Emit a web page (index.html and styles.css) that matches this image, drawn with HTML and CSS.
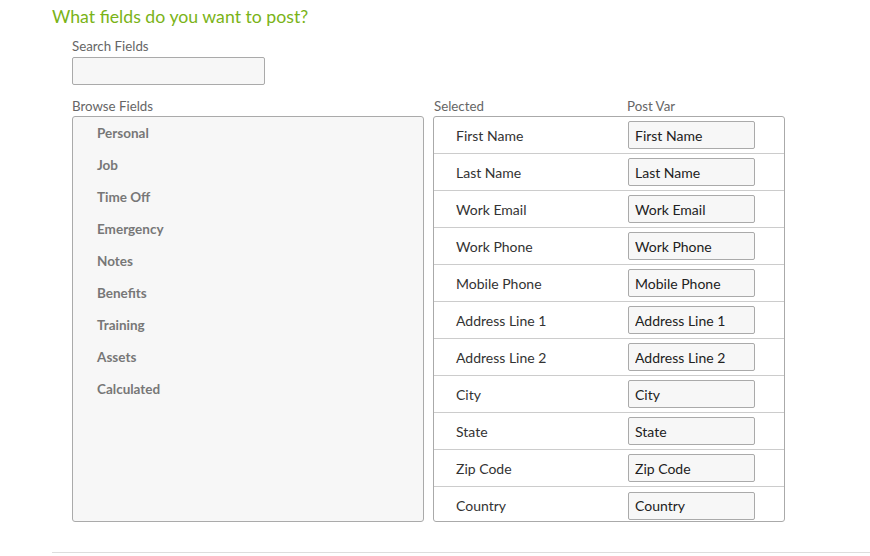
FILE: index.html
```html
<!DOCTYPE html>
<html>
<head>
<meta charset="utf-8">
<link rel="stylesheet" href="styles.css">
</head>
<body>
<div class="page">
  <h2 class="title">What fields do you want to post?</h2>
  <div class="content">
    <label class="label">Search Fields</label>
    <input class="search" type="text">
    <div class="columns">
      <div class="col-browse">
        <div class="label">Browse Fields</div>
        <div class="browse-box">
          <div class="cat">Personal</div>
          <div class="cat">Job</div>
          <div class="cat">Time Off</div>
          <div class="cat">Emergency</div>
          <div class="cat">Notes</div>
          <div class="cat">Benefits</div>
          <div class="cat">Training</div>
          <div class="cat">Assets</div>
          <div class="cat">Calculated</div>
        </div>
      </div>
      <div class="col-selected">
        <div class="sel-head">
          <div class="label h-sel">Selected</div>
          <div class="label h-var">Post Var</div>
        </div>
        <div class="sel-box">
          <div class="row"><span class="name">First Name</span><input class="var" value="First Name"></div>
          <div class="row"><span class="name">Last Name</span><input class="var" value="Last Name"></div>
          <div class="row"><span class="name">Work Email</span><input class="var" value="Work Email"></div>
          <div class="row"><span class="name">Work Phone</span><input class="var" value="Work Phone"></div>
          <div class="row"><span class="name">Mobile Phone</span><input class="var" value="Mobile Phone"></div>
          <div class="row"><span class="name">Address Line 1</span><input class="var" value="Address Line 1"></div>
          <div class="row"><span class="name">Address Line 2</span><input class="var" value="Address Line 2"></div>
          <div class="row"><span class="name">City</span><input class="var" value="City"></div>
          <div class="row"><span class="name">State</span><input class="var" value="State"></div>
          <div class="row"><span class="name">Zip Code</span><input class="var" value="Zip Code"></div>
          <div class="row"><span class="name">Country</span><input class="var" value="Country"></div>
        </div>
      </div>
    </div>
  </div>
  <div class="rule"></div>
</div>
</body>
</html>
```
FILE: styles.css
```css
* { box-sizing: border-box; }
html, body { margin: 0; padding: 0; background: #fff; }
body {
  font-family: Lato, "Open Sans", sans-serif;
  color: #333;
  width: 870px;
  height: 556px;
  overflow: hidden;
}
.page { padding: 7px 0 0 52px; }
.title {
  margin: 0;
  font-size: 17.7px;
  font-weight: 400;
  color: #7ab317;
  line-height: 20px;
}
.content { padding: 11px 0 0 20px; }
.label {
  display: block;
  font-size: 13.3px;
  color: #666;
  line-height: 16px;
}
.search {
  display: block;
  margin-top: 3px;
  width: 193px;
  height: 28px;
  background: #f7f7f7;
  border: 1px solid #aaa;
  border-radius: 2px;
  padding: 0 6px;
  font: inherit;
}
.columns {
  display: flex;
  gap: 9px;
  margin-top: 13px;
}
.col-browse { width: 352px; }
.col-selected { width: 352px; }
.browse-box {
  margin-top: 2px;
  height: 406px;
  background: #f7f7f7;
  border: 1px solid #aaa;
  border-radius: 3px;
  padding: 8px 0 0 24px;
}
.cat {
  font-size: 13.5px;
  font-weight: 700;
  color: #777;
  line-height: 16px;
  margin-bottom: 16px;
}
.sel-head { display: flex; }
.h-sel { width: 194px; padding-left: 1px; }
.sel-box {
  margin-top: 2px;
  height: 406px;
  overflow: hidden;
  background: #fff;
  border: 1px solid #aaa;
  border-radius: 3px;
}
.row {
  display: flex;
  align-items: center;
  height: 37px;
  border-bottom: 1px solid #ccc;
  padding-left: 22px;
}
.row:last-child { border-bottom: none; }
.name {
  width: 172px;
  font-size: 14px;
  color: #333;
}
.var {
  width: 127px;
  height: 28px;
  background: #f7f7f7;
  border: 1px solid #aaa;
  border-radius: 2px;
  padding: 0 6px;
  font-family: Lato, "Open Sans", sans-serif;
  font-size: 14px;
  color: #222;
}
.rule {
  margin-top: 30px;
  height: 1px;
  background: #ddd;
}
```
